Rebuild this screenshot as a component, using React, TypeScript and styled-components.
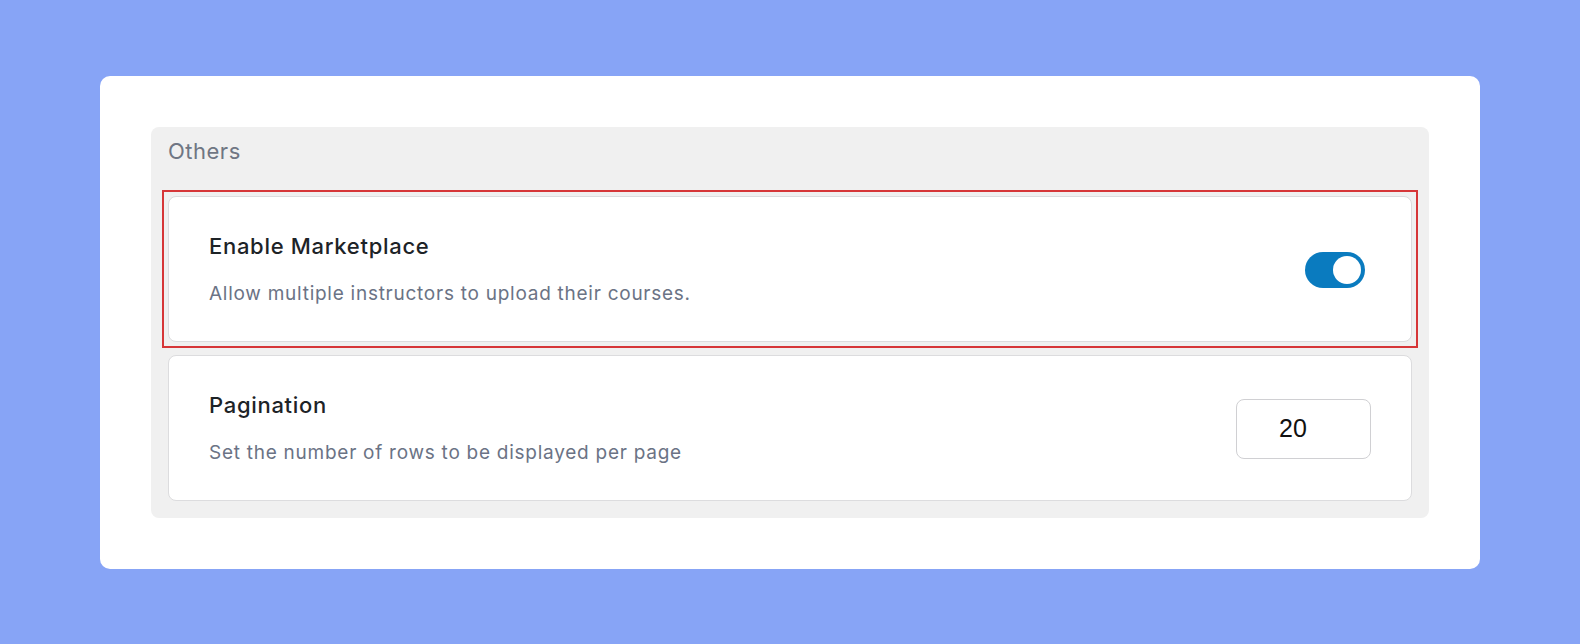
import React from 'react';
import styled, { createGlobalStyle } from 'styled-components';

const GlobalStyle = createGlobalStyle`
  html, body {
    margin: 0;
    padding: 0;
  }

  body {
    background: #87a4f6;
    font-family: Inter, "Noto Sans", sans-serif;
    -webkit-font-smoothing: antialiased;
  }
`;

interface SettingRowProps {
  title: string;
  description: string;
  highlighted?: boolean;
  children: React.ReactNode;
}

const SettingRow: React.FC<SettingRowProps> = ({ title, description, highlighted, children }) => (
  <RowCard $highlighted={highlighted}>
    <RowText>
      <RowTitle>{title}</RowTitle>
      <RowDescription>{description}</RowDescription>
    </RowText>
    {children}
  </RowCard>
);

const App: React.FC = () => {
  return (
    <>
      <GlobalStyle />
      <Page>
        <Card>
          <Section>
            <SectionHeader>Others</SectionHeader>
            <RowList>
              <SettingRow
                title="Enable Marketplace"
                description="Allow multiple instructors to upload their courses."
                highlighted
              >
                <Toggle $on aria-label="Enable Marketplace">
                  <Knob />
                </Toggle>
              </SettingRow>
              <SettingRow
                title="Pagination"
                description="Set the number of rows to be displayed per page"
              >
                <NumberInput type="text" value="20" readOnly />
              </SettingRow>
            </RowList>
          </Section>
        </Card>
      </Page>
    </>
  );
};

// Styles
const Page = styled.div`
  min-height: 100vh;
  display: flex;
  align-items: center;
  justify-content: center;
`;

const Card = styled.div`
  width: 1380px;
  box-sizing: border-box;
  padding: 51px;
  background: #ffffff;
  border-radius: 10px;
`;

const Section = styled.div`
  background: #f0f0f0;
  border-radius: 8px;
  padding: 0 17px 17px;
`;

const SectionHeader = styled.div`
  height: 69px;
  box-sizing: border-box;
  padding-top: 10px;
  font-size: 22px;
  line-height: 28px;
  letter-spacing: 0.5px;
  color: #6f7683;
`;

const RowList = styled.div`
  display: flex;
  flex-direction: column;
  gap: 13px;
`;

const RowCard = styled.div<{ $highlighted?: boolean }>`
  position: relative;
  display: flex;
  align-items: center;
  justify-content: space-between;
  padding: 35px 40px 33px;
  background: #ffffff;
  border: 1px solid #dcdcde;
  border-radius: 8px;

  &::before {
    content: '';
    display: ${({ $highlighted }) => ($highlighted ? 'block' : 'none')};
    position: absolute;
    inset: -7px;
    border: 2px solid #d63638;
    pointer-events: none;
  }
`;

const RowText = styled.div`
  display: flex;
  flex-direction: column;
  gap: 20px;
`;

const RowTitle = styled.div`
  font-size: 22px;
  line-height: 28px;
  font-weight: 500;
  letter-spacing: 0.7px;
  color: #1d2327;
`;

const RowDescription = styled.div`
  font-size: 19px;
  line-height: 28px;
  letter-spacing: 0.74px;
  color: #6b7385;
`;

const Toggle = styled.button<{ $on?: boolean }>`
  width: 60px;
  height: 36px;
  margin-right: 6px;
  padding: 4px;
  border: none;
  border-radius: 18px;
  background: ${({ $on }) => ($on ? '#0a7bbf' : '#c3c4c7')};
  display: flex;
  justify-content: ${({ $on }) => ($on ? 'flex-end' : 'flex-start')};
  align-items: center;
  box-sizing: border-box;
  cursor: pointer;
`;

const Knob = styled.span`
  width: 28px;
  height: 28px;
  border-radius: 50%;
  background: #ffffff;
`;

const NumberInput = styled.input`
  width: 135px;
  height: 60px;
  box-sizing: border-box;
  padding: 0 0 0 42px;
  border: 1px solid #d0d0d3;
  border-radius: 8px;
  font-family: "Liberation Sans", Arial, sans-serif;
  font-size: 25px;
  color: #111111;
  background: #ffffff;
  outline: none;
`;

export default App;
